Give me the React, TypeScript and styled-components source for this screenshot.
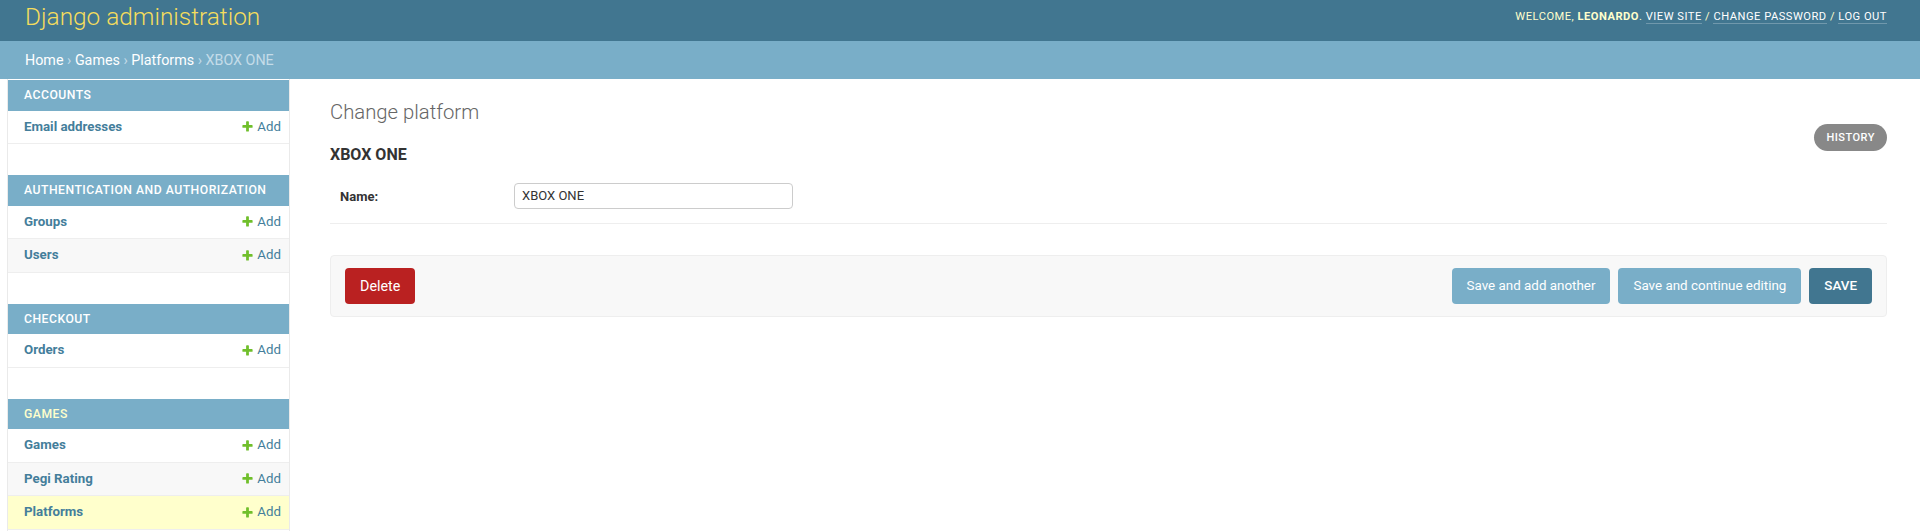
import React from 'react';
import styled, { createGlobalStyle } from 'styled-components';

const GlobalStyle = createGlobalStyle`
  body {
    margin: 0;
    padding: 0;
    font-family: Roboto, 'Liberation Sans', sans-serif;
    font-size: 14px;
    color: #333;
    background: #fff;
  }
  * {
    box-sizing: border-box;
  }
`;

const Header = styled.header`
  display: flex;
  justify-content: space-between;
  align-items: center;
  height: 41px;
  padding: 0 33px 8px 25px;
  background: #417690;
`;

const Branding = styled.h1`
  margin: 0;
  font-size: 24.4px;
  font-weight: 300;
  color: #f5dd5d;
`;

const UserTools = styled.div`
  font-size: 11.15px;
  letter-spacing: 0.5px;
  text-transform: uppercase;
  color: #ffc;

  strong {
    font-weight: 700;
  }
`;

const ToolLink = styled.a`
  color: #fff;
  text-decoration: none;
  border-bottom: 1px solid rgba(255, 255, 255, 0.25);
`;

const Breadcrumbs = styled.nav`
  padding: 9.5px 25px 10px;
  background: #79aec8;
  font-size: 14.3px;
  line-height: 18px;
  color: #c4dce8;
`;

const CrumbLink = styled.a`
  color: #fff;
  text-decoration: none;
`;

const Main = styled.div`
  display: flex;
  align-items: stretch;
`;

const ToggleColumn = styled.div`
  flex: 0 0 8px;
  border-right: 1px solid #eaeaea;
`;

const Sidebar = styled.nav`
  flex: 0 0 282px;
  padding-top: 1.5px;
  border-right: 1px solid #eaeaea;
`;

const AppModule = styled.div`
  margin-bottom: 31px;
`;

const AppCaption = styled.div<{ $current?: boolean }>`
  padding: 8px 8px 8px 16px;
  background: #79aec8;
  color: ${p => (p.$current ? '#ffc' : '#fff')};
  font-size: 12.2px;
  line-height: 14.5px;
  letter-spacing: 0.5px;
  text-transform: uppercase;
  font-weight: 500;
`;

const ModelRow = styled.div<{ $bg: string }>`
  display: flex;
  justify-content: space-between;
  align-items: center;
  padding: 8px 8px 8px 16px;
  line-height: 16.5px;
  font-size: 13.3px;
  border-bottom: 1px solid #eee;
  background: ${p => p.$bg};
`;

const ModelLink = styled.a`
  color: #447e9b;
  font-weight: 700;
  text-decoration: none;
`;

const AddLink = styled.a`
  display: flex;
  align-items: center;
  gap: 3px;
  color: #447e9b;
  text-decoration: none;
`;

const Content = styled.main`
  flex: 1;
  padding: 21.5px 33px 20px 40px;
`;

const PageTitle = styled.h1`
  margin: 0;
  font-size: 20.3px;
  font-weight: 300;
  color: #666;
`;

const TitleRow = styled.div`
  display: flex;
  justify-content: space-between;
  align-items: flex-start;
`;

const ObjectName = styled.h2`
  margin: 20.5px 0 8px;
  font-size: 16px;
  font-weight: 700;
  color: #333;
`;

const HistoryLink = styled.a`
  display: block;
  height: 27px;
  line-height: 27px;
  padding: 0 12px;
  border-radius: 15px;
  background: #888;
  color: #fff;
  font-size: 11px;
  font-weight: 500;
  letter-spacing: 0.5px;
  text-transform: uppercase;
  text-decoration: none;
`;

const FormRow = styled.div`
  display: flex;
  align-items: flex-start;
  padding: 11px 10px 14px;
  border-bottom: 1px solid #eee;
`;

const FieldLabel = styled.label`
  flex: 0 0 174px;
  padding-top: 6px;
  font-size: 13px;
  line-height: 16px;
  font-weight: 700;
  color: #333;
`;

const TextInput = styled.input`
  width: 279px;
  height: 26px;
  padding: 0 7px;
  border: 1px solid #ccc;
  border-radius: 4px;
  font-family: inherit;
  font-size: 13px;
  color: #333;
`;

const SubmitRow = styled.div`
  display: flex;
  align-items: center;
  gap: 8px;
  margin-top: 31px;
  padding: 12px 14px;
  background: #f8f8f8;
  border: 1px solid #eee;
  border-radius: 4px;
`;

const DeleteLink = styled.a`
  margin-right: auto;
  height: 36px;
  line-height: 36px;
  padding: 0 15px;
  border-radius: 4px;
  background: #ba2121;
  color: #fff;
  font-size: 14.3px;
  text-decoration: none;
`;

const SubmitButton = styled.button<{ $primary?: boolean }>`
  height: 36px;
  padding: 0 15px;
  border: none;
  border-radius: 4px;
  background: ${p => (p.$primary ? '#417690' : '#79aec8')};
  color: #fff;
  font-family: inherit;
  font-size: 13.4px;
  font-weight: ${p => (p.$primary ? 500 : 400)};
  text-transform: ${p => (p.$primary ? 'uppercase' : 'none')};
`;

const PlusIcon = () => (
  <svg width="13" height="13" viewBox="0 0 1792 1792">
    <path
      fill="#70bf2b"
      d="M1600 796v192q0 40-28 68t-68 28h-416v416q0 40-28 68t-68 28h-192q-40 0-68-28t-28-68v-416h-416q-40 0-68-28t-28-68v-192q0-40 28-68t68-28h416v-416q0-40 28-68t68-28h192q40 0 68 28t28 68v416h416q40 0 68 28t28 68z"
    />
  </svg>
);

const apps = [
  { name: 'Accounts', models: ['Email addresses'] },
  { name: 'Authentication and Authorization', models: ['Groups', 'Users'] },
  { name: 'Checkout', models: ['Orders'] },
  { name: 'Games', models: ['Games', 'Pegi Rating', 'Platforms'], current: true },
];

const currentModel = 'Platforms';

const App: React.FC = () => {
  return (
    <>
      <GlobalStyle />
      <Header>
        <Branding>Django administration</Branding>
        <UserTools>
          Welcome, <strong>leonardo</strong>. <ToolLink href="#">View site</ToolLink> /{' '}
          <ToolLink href="#">Change password</ToolLink> / <ToolLink href="#">Log out</ToolLink>
        </UserTools>
      </Header>
      <Breadcrumbs>
        <CrumbLink href="#">Home</CrumbLink> › <CrumbLink href="#">Games</CrumbLink> ›{' '}
        <CrumbLink href="#">Platforms</CrumbLink> › XBOX ONE
      </Breadcrumbs>
      <Main>
        <ToggleColumn />
        <Sidebar>
          {apps.map(app => (
            <AppModule key={app.name}>
              <AppCaption $current={app.current}>{app.name}</AppCaption>
              {app.models.map((model, i) => {
                const bg = app.current && model === currentModel ? '#ffc' : i % 2 === 1 ? '#f8f8f8' : '#fff';
                return (
                  <ModelRow key={model} $bg={bg}>
                    <ModelLink href="#">{model}</ModelLink>
                    <AddLink href="#">
                      <PlusIcon />
                      Add
                    </AddLink>
                  </ModelRow>
                );
              })}
            </AppModule>
          ))}
        </Sidebar>
        <Content>
          <PageTitle>Change platform</PageTitle>
          <TitleRow>
            <ObjectName>XBOX ONE</ObjectName>
            <HistoryLink href="#">History</HistoryLink>
          </TitleRow>
          <FormRow>
            <FieldLabel htmlFor="id_name">Name:</FieldLabel>
            <TextInput id="id_name" defaultValue="XBOX ONE" />
          </FormRow>
          <SubmitRow>
            <DeleteLink href="#">Delete</DeleteLink>
            <SubmitButton>Save and add another</SubmitButton>
            <SubmitButton>Save and continue editing</SubmitButton>
            <SubmitButton $primary>Save</SubmitButton>
          </SubmitRow>
        </Content>
      </Main>
    </>
  );
};

export default App;
